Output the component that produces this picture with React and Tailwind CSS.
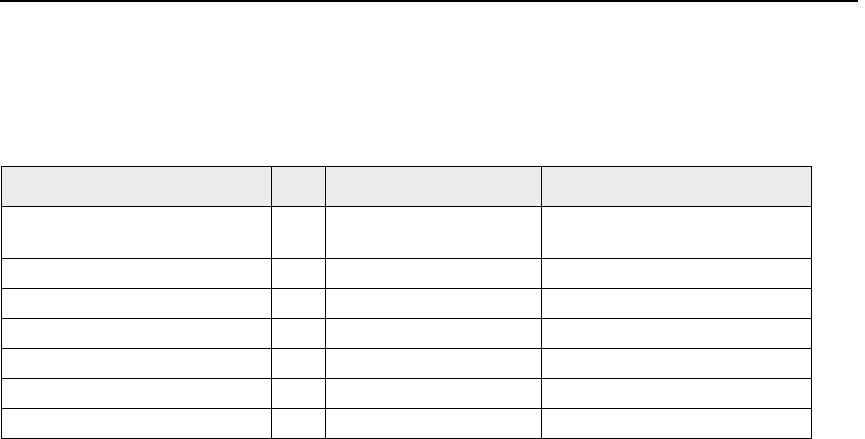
import React from "react";

const COLS = ["w-[270px]", "w-[54px]", "w-[216px]", "w-[270px]"];
const ROWS = [52, 30, 30, 30, 30, 30, 30];

export default function App() {
  return (
    <div className="bg-white w-[865px] h-[439px] overflow-hidden font-['Liberation_Sans',sans-serif]">
      {/* top rule */}
      <div className="w-[858px] h-[2px] bg-black" />

      <table className="mt-[164px] ml-[1px] table-fixed border-collapse w-[811px]">
        <colgroup>
          {COLS.map((c, i) => <col key={i} className={c} />)}
        </colgroup>
        <thead>
          <tr className="h-[40px] bg-[#ececec]">
            {COLS.map((_, i) => <th key={i} className="border border-black p-0" />)}
          </tr>
        </thead>
        <tbody>
          {ROWS.map((h, r) => (
            <tr key={r} className={h === 52 ? "h-[52px]" : "h-[30px]"}>
              {COLS.map((_, i) => <td key={i} className="border border-black p-0" />)}
            </tr>
          ))}
        </tbody>
      </table>
    </div>
  );
}
